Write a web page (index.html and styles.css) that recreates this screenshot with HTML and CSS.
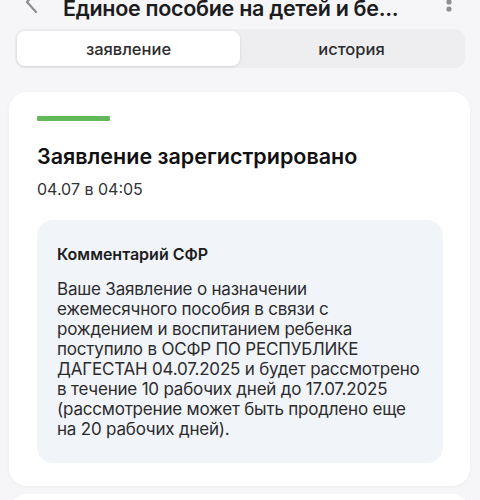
FILE: index.html
```html
<!DOCTYPE html>
<html lang="ru">
<head>
<meta charset="utf-8">
<title>Единое пособие</title>
<link rel="stylesheet" href="styles.css">
</head>
<body>
<header class="header">
  <span class="back">
    <svg width="14" height="24" viewBox="0 0 14 24"><path d="M11 2 L2 12 L11 22" fill="none" stroke="#8e8e93" stroke-width="2.2" stroke-linecap="round" stroke-linejoin="round"/></svg>
  </span>
  <h1 class="title">Единое пособие на детей и бе...</h1>
  <span class="kebab">
    <svg width="8" height="24" viewBox="0 0 8 24"><circle cx="4" cy="3" r="2.6" fill="#8e8e93"/><circle cx="4" cy="10" r="2.6" fill="#8e8e93"/><circle cx="4" cy="17" r="2.6" fill="#8e8e93"/></svg>
  </span>
</header>
<nav class="segmented">
  <div class="segment active">заявление</div>
  <div class="segment">история</div>
</nav>
<main>
  <section class="card">
    <div class="status-bar"></div>
    <h2 class="card-title">Заявление зарегистрировано</h2>
    <div class="date">04.07 в 04:05</div>
    <div class="comment">
      <div class="comment-title">Комментарий СФР</div>
      <p class="comment-text">Ваше Заявление о назначении<br>ежемесячного пособия в связи с<br>рождением и воспитанием ребенка<br>поступило в ОСФР ПО РЕСПУБЛИКЕ<br>ДАГЕСТАН 04.07.2025 и будет рассмотрено<br>в течение 10 рабочих дней до 17.07.2025<br>(рассмотрение может быть продлено еще<br>на 20 рабочих дней).</p>
    </div>
  </section>
  <section class="card next"></section>
</main>
</body>
</html>
```
FILE: styles.css
```css
* { box-sizing: border-box; }
html, body { margin: 0; padding: 0; }
body {
  background: #f6f6f8;
  font-family: Inter, "Noto Sans", "Liberation Sans", sans-serif;
  color: #1c1c1e;
  width: 480px;
  height: 500px;
  overflow: hidden;
}
.header {
  height: 22px;
  display: flex;
  align-items: flex-end;
  position: relative;
}
.back {
  position: absolute;
  left: 25px;
  top: -10px;
  width: 14px;
  height: 24px;
}
.back svg, .kebab svg { display: block; }
.title {
  margin: 0 0 0 63px;
  font-size: 21.5px;
  font-weight: 600;
  line-height: 28px;
  letter-spacing: -0.3px;
  white-space: nowrap;
  color: #1c1c1e;
}
.kebab {
  position: absolute;
  left: 445px;
  top: -8px;
}
.segmented {
  margin: 7px 0 0 15px;
  width: 450px;
  height: 39px;
  padding: 2px;
  display: flex;
  background: #eeeef0;
  border-radius: 10px;
}
.segment {
  flex: 1;
  display: flex;
  align-items: center;
  justify-content: center;
  font-size: 16.5px;
  font-weight: 500;
  color: #2c2c2e;
  border-radius: 8px;
}
.segment.active {
  background: #ffffff;
  box-shadow: 0 1px 3px rgba(0,0,0,0.12);
}
main { padding: 24px 10px 0 9px; }
.card {
  width: 461px;
  background: #ffffff;
  border-radius: 18px;
  padding: 24px 27px 23px 28px;
  box-shadow: 0 1px 4px rgba(0,0,0,0.04);
}
.status-bar {
  width: 73px;
  height: 5px;
  border-radius: 1px;
  background: #63b95a;
}
.card-title {
  margin: 22px 0 0;
  font-size: 21.5px;
  font-weight: 600;
  line-height: 26px;
  color: #111;
}
.date {
  margin-top: 10px;
  font-size: 16px;
  line-height: 20px;
  color: #333;
}
.comment {
  margin-top: 21px;
  background: #f1f4f9;
  border-radius: 16px;
  padding: 24px 20px 24px 20px;
}
.comment-title {
  font-size: 16px;
  font-weight: 600;
  line-height: 20px;
  color: #1c1c1e;
}
.comment-text {
  margin: 15px 0 0;
  font-size: 17px;
  line-height: 20px;
  letter-spacing: -0.2px;
  color: #2c2c2e;
}
.card.next {
  margin-top: 8px;
  height: 40px;
  padding: 0;
}
```
